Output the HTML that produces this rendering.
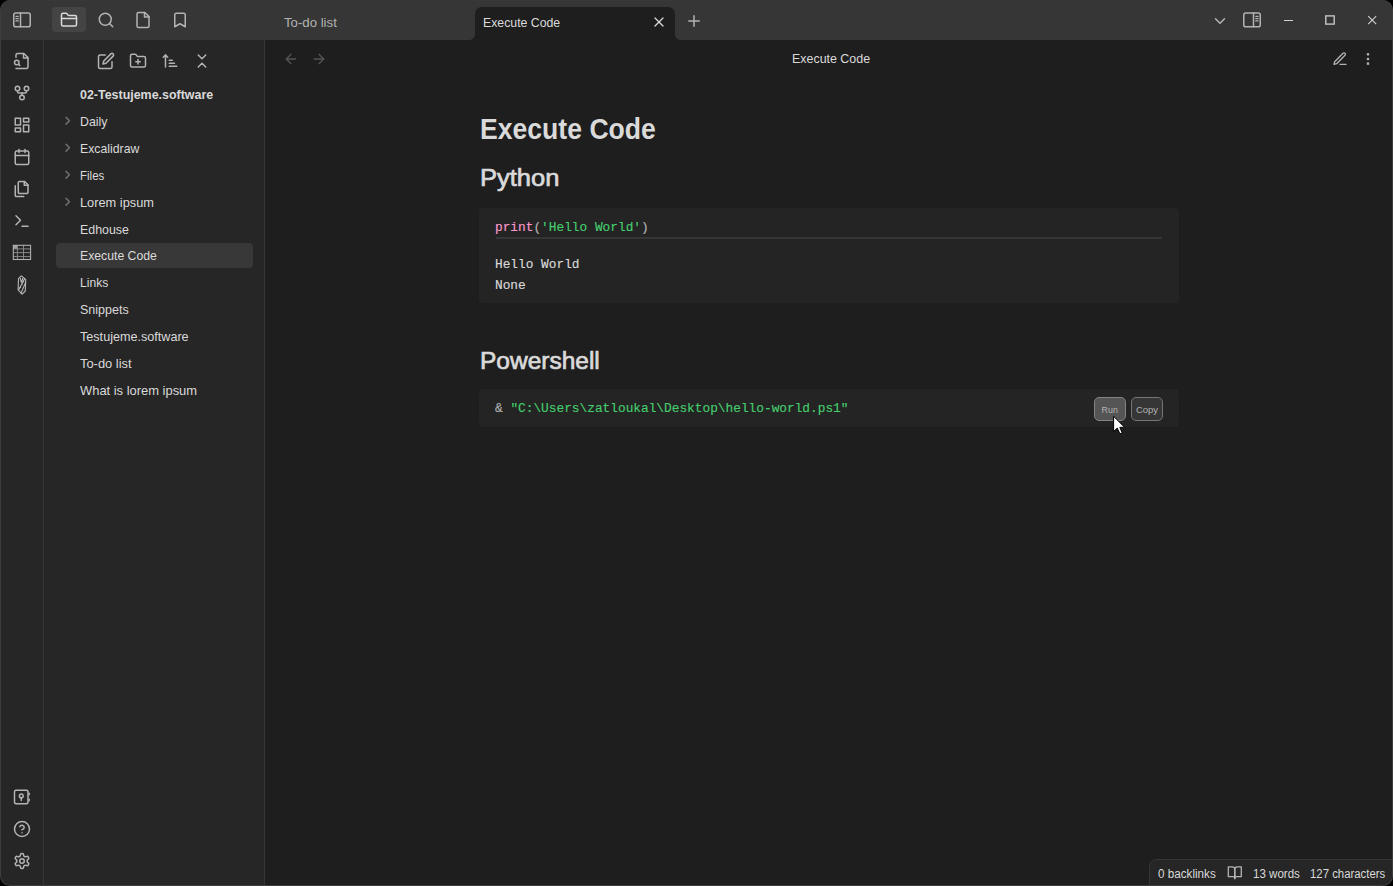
<!DOCTYPE html>
<html>
<head>
<meta charset="utf-8">
<title>Execute Code - Obsidian</title>
<style>
*{box-sizing:border-box;margin:0;padding:0}
html,body{width:1393px;height:886px;overflow:hidden;background:#000;font-family:"Liberation Sans",sans-serif;}
#win{position:absolute;left:0;top:0;width:1393px;height:886px;background:#1e1e1e;border-radius:10px;overflow:hidden;}
#titlebar{position:absolute;left:0;top:0;width:1393px;height:40px;background:#363636;}
#ribbon{position:absolute;left:0;top:40px;width:44px;height:846px;background:#262626;border-right:1px solid #363636;}
#side{position:absolute;left:44px;top:40px;width:221px;height:846px;background:#262626;border-right:1px solid #363636;}
#main{position:absolute;left:265px;top:40px;width:1128px;height:846px;background:#1e1e1e;}
.abs{position:absolute}
svg.ic{position:absolute;fill:none;stroke:#b3b3b3;stroke-width:2;stroke-linecap:round;stroke-linejoin:round;overflow:visible}
.h2{font-size:24.4px;color:#dadada;-webkit-text-stroke:0.7px #dadada}
.m{font-family:"Liberation Mono",monospace;font-size:13.7px;color:#b3b3b3;transform:scaleX(.9355);-webkit-text-stroke:0.15px}
.s{font-size:12px;color:#b3b3b3}
.btn{width:32px;height:24px;border:1px solid;border-radius:5px;font-size:9.5px;color:#b3b3b3;text-align:center;line-height:23px}
.f{left:36px;font-size:13px;color:#b3b3b3}
svg.ch{left:17.45px;stroke:#6e6e6e;stroke-width:2.7}
.t{position:absolute;transform-origin:0 50%;white-space:nowrap;color:#dadada;line-height:1}
</style>
</head>
<body>
<div id="win">
<div id="titlebar">
<!-- left sidebar toggle -->
<svg class="ic" style="left:13px;top:11px" width="18" height="18" viewBox="0 0 24 24"><rect x="1" y="2.6" width="22" height="18.4" rx="2.8"/><line x1="10" y1="2.6" x2="10" y2="21"/><g stroke-width="1.5"><line x1="3.8" y1="7.1" x2="7.1" y2="7.1"/><line x1="3.8" y1="10.1" x2="7.1" y2="10.1"/><line x1="3.8" y1="13.2" x2="7.1" y2="13.2"/></g></svg>
<div class="abs" style="left:52px;top:7px;width:34px;height:25px;border-radius:4px;background:#444444"></div>
<svg class="ic" style="left:60px;top:11px;stroke:#dadada" width="18" height="18" viewBox="0 0 24 24"><path d="M4 20h16a2 2 0 0 0 2-2V8a2 2 0 0 0-2-2h-7.93a2 2 0 0 1-1.66-.9l-.82-1.2A2 2 0 0 0 7.93 3H4a2 2 0 0 0-2 2v13c0 1.1.9 2 2 2Z"/><path d="M2 10h20"/></svg>
<svg class="ic" style="left:97px;top:11px" width="18" height="18" viewBox="0 0 24 24"><circle cx="11" cy="11" r="8"/><line x1="21" y1="21" x2="16.65" y2="16.65"/></svg>
<svg class="ic" style="left:134px;top:11px" width="18" height="18" viewBox="0 0 24 24"><path d="M14.5 2H6a2 2 0 0 0-2 2v16a2 2 0 0 0 2 2h12a2 2 0 0 0 2-2V7.5L14.5 2z"/><polyline points="14 2 14 8 20 8"/></svg>
<svg class="ic" style="left:171px;top:11px" width="18" height="18" viewBox="0 0 24 24"><path d="m19 21-7-4-7 4V5a2 2 0 0 1 2-2h10a2 2 0 0 1 2 2v16z"/></svg>
<!-- tabs -->
<div class="t" style="left:284px;top:16px;font-size:13px;color:#b3b3b3;transform:scaleX(1.015)">To-do list</div>
<div class="abs" style="left:475px;top:7px;width:200px;height:33px;background:#1e1e1e;border-radius:7px 7px 0 0"></div>
<div class="abs" style="left:469px;top:34px;width:6px;height:6px;background:radial-gradient(circle at 0 0,#363636 5.5px,#1e1e1e 6.5px)"></div>
<div class="abs" style="left:675px;top:34px;width:6px;height:6px;background:radial-gradient(circle at 100% 0,#363636 5.5px,#1e1e1e 6.5px)"></div>
<div class="t" style="left:483.4px;top:16px;font-size:13px;color:#dadada;transform:scaleX(.945)">Execute Code</div>
<svg class="ic" style="left:651px;top:14px;stroke:#dadada;stroke-width:1.9" width="16" height="16" viewBox="0 0 24 24"><line x1="18" y1="6" x2="6" y2="18"/><line x1="6" y1="6" x2="18" y2="18"/></svg>
<svg class="ic" style="left:685px;top:12px" width="18" height="18" viewBox="0 0 24 24"><line x1="12" y1="5" x2="12" y2="19"/><line x1="5" y1="12" x2="19" y2="12"/></svg>
<!-- right -->
<svg class="ic" style="left:1211px;top:11.6px" width="18" height="18" viewBox="0 0 24 24"><polyline points="6 9 12 15 18 9"/></svg>
<svg class="ic" style="left:1243.2px;top:11px" width="18" height="18" viewBox="0 0 24 24"><rect x="1" y="2.6" width="22" height="18.4" rx="2.8"/><line x1="14" y1="2.6" x2="14" y2="21"/><g stroke-width="1.5"><line x1="16.9" y1="7.1" x2="20.2" y2="7.1"/><line x1="16.9" y1="10.1" x2="20.2" y2="10.1"/><line x1="16.9" y1="13.2" x2="20.2" y2="13.2"/></g></svg>
<div class="abs" style="left:1284px;top:20px;width:8.5px;height:1px;background:#cfcfcf"></div>
<svg class="abs" style="left:1324px;top:14px;overflow:visible" width="12" height="12" viewBox="0 0 12 12"><rect x="1.8" y="1.9" width="8.4" height="8.2" fill="none" stroke="#c4c4c4" stroke-width="1.4"/></svg>
<svg class="ic" style="left:1368px;top:16px;stroke:#d4d4d4;stroke-width:1.05;stroke-linecap:butt" width="8.4" height="8.4" viewBox="0 0 8.4 8.4"><line x1="0.2" y1="0.2" x2="8.2" y2="8.2"/><line x1="8.2" y1="0.2" x2="0.2" y2="8.2"/></svg>
</div>
<div id="ribbon">
<!-- quick switcher (file-search) y=61 -->
<svg class="ic" style="left:13px;top:12px" width="18" height="18" viewBox="0 0 24 24"><path d="M4 22h14a2 2 0 0 0 2-2V7.5L14.5 2H6a2 2 0 0 0-2 2v3"/><polyline points="14 2 14 8 20 8"/><path d="M5 17a3 3 0 1 0 0-6 3 3 0 0 0 0 6z"/><path d="m9 18-1.5-1.500"/></svg>
<!-- graph -->
<svg class="ic" style="left:13px;top:44px" width="18" height="18" viewBox="0 0 24 24"><circle cx="12" cy="18" r="3"/><circle cx="6" cy="6" r="3"/><circle cx="18" cy="6" r="3"/><path d="M18 9v1a2 2 0 0 1-2 2H8a2 2 0 0 1-2-2V9"/><path d="M12 12v3"/></svg>
<!-- canvas -->
<svg class="ic" style="left:13px;top:76px" width="18" height="18" viewBox="0 0 24 24"><rect x="3" y="3" width="7" height="9"/><rect x="14" y="3" width="7" height="5"/><rect x="14" y="12" width="7" height="9"/><rect x="3" y="16" width="7" height="5"/></svg>
<!-- calendar -->
<svg class="ic" style="left:13px;top:108px" width="18" height="18" viewBox="0 0 24 24"><rect x="3" y="4" width="18" height="18" rx="2" ry="2"/><line x1="16" y1="2" x2="16" y2="6"/><line x1="8" y1="2" x2="8" y2="6"/><line x1="3" y1="10" x2="21" y2="10"/></svg>
<!-- files -->
<svg class="ic" style="left:13px;top:140px" width="18" height="18" viewBox="0 0 24 24"><path d="M15.500 2H8.600c-.400 0-.800.200-1.100.500-.300.300-.500.700-.500 1.100v12.800c0 .400.200.800.500 1.100.300.300.700.500 1.100.500h9.800c.400 0 .800-.200 1.100-.500.300-.300.500-.700.500-1.100V6.500L15.500 2z"/><path d="M3 7.600v12.800c0 .400.200.800.500 1.100.300.300.700.500 1.100.500h9.800"/><path d="M15 2v5h5"/></svg>
<!-- terminal -->
<svg class="ic" style="left:13px;top:172px" width="18" height="18" viewBox="0 0 24 24"><polyline points="4 17 10 11 4 5"/><line x1="12" y1="19" x2="20" y2="19"/></svg>
<!-- table -->
<svg class="ic" style="left:12px;top:204px;stroke-linecap:butt;stroke-linejoin:miter;stroke:#8e8e8e;stroke-width:0.9" width="20" height="17" viewBox="0 0 20 17"><rect x="1.3" y="1.3" width="4.1" height="3.6" fill="#a0a0a0" stroke="none"/><line x1="1.3" y1="4.9" x2="18.6" y2="4.9"/><line x1="1.3" y1="8.6" x2="18.6" y2="8.6"/><line x1="1.3" y1="12.6" x2="18.6" y2="12.6"/><line x1="5.4" y1="1.3" x2="5.4" y2="15.5"/><line x1="11.5" y1="1.3" x2="11.5" y2="15.5"/><rect x="1.3" y="1.3" width="17.3" height="14.2" stroke="#b3b3b3" stroke-width="1.05"/></svg>
<!-- excalidraw -->
<svg class="ic" style="left:17px;top:235px;stroke-width:1.1;stroke:#b8b8b8" width="10" height="20" viewBox="0 0 10 20"><path d="M4.35 0.8 L8.7 4.4 L8.3 16 L5.1 19.2 L1.1 14.9 L1.5 3.7 Z"/><path d="M7.6 3.7 L1.8 14.5 M8.7 7.3 L4 18.1 M3.3 3.3 L4.35 7.3 L5.9 3.3"/><g fill="#b0b0b0" stroke="none"><circle cx="6.4" cy="6.7" r="0.75"/><circle cx="4.9" cy="9.6" r="0.75"/><circle cx="3.5" cy="12.5" r="0.75"/></g></svg>
<!-- vault -->
<svg class="ic" style="left:13px;top:748px" width="18" height="18" viewBox="0 0 24 24"><rect x="2" y="3" width="18" height="18" rx="2"/><circle cx="11" cy="10.500" r="2.500"/><line x1="11" y1="13" x2="11" y2="16.500"/><line x1="21.500" y1="7" x2="21.500" y2="9"/><line x1="21.500" y1="15" x2="21.500" y2="17"/></svg>
<!-- help -->
<svg class="ic" style="left:13px;top:780px" width="18" height="18" viewBox="0 0 24 24"><circle cx="12" cy="12" r="10"/><path d="M9.090 9a3 3 0 0 1 5.830 1c0 2-3 3-3 3"/><line x1="12" y1="17" x2="12.010" y2="17"/></svg>
<!-- settings -->
<svg class="ic" style="left:13px;top:812px" width="18" height="18" viewBox="0 0 24 24"><path d="M12.220 2h-.440a2 2 0 0 0-2 2v.180a2 2 0 0 1-1 1.730l-.430.250a2 2 0 0 1-2 0l-.150-.080a2 2 0 0 0-2.730.730l-.220.380a2 2 0 0 0 .730 2.730l.150.100a2 2 0 0 1 1 1.720v.510a2 2 0 0 1-1 1.740l-.150.090a2 2 0 0 0-.730 2.730l.220.380a2 2 0 0 0 2.730.730l.150-.080a2 2 0 0 1 2 0l.430.250a2 2 0 0 1 1 1.730V20a2 2 0 0 0 2 2h.440a2 2 0 0 0 2-2v-.180a2 2 0 0 1 1-1.730l.430-.250a2 2 0 0 1 2 0l.150.080a2 2 0 0 0 2.730-.730l.220-.390a2 2 0 0 0-.730-2.730l-.150-.080a2 2 0 0 1-1-1.740v-.500a2 2 0 0 1 1-1.740l.150-.090a2 2 0 0 0 .730-2.730l-.220-.380a2 2 0 0 0-2.730-.730l-.150.080a2 2 0 0 1-2 0l-.430-.250a2 2 0 0 1-1-1.730V4a2 2 0 0 0-2-2z"/><circle cx="12" cy="12" r="3"/></svg>
</div>
<div id="side">
<!-- nav buttons: coords relative to side (x-44, y-40) -->
<svg class="ic" style="left:53px;top:12px" width="18" height="18" viewBox="0 0 24 24"><path d="M11 4H4a2 2 0 0 0-2 2v14a2 2 0 0 0 2 2h14a2 2 0 0 0 2-2v-7"/><path d="M18.500 2.500a2.121 2.121 0 0 1 3 3L12 15l-4 1 1-4 9.500-9.500z"/></svg>
<svg class="ic" style="left:85px;top:12px" width="18" height="18" viewBox="0 0 24 24"><path d="M4 20h16a2 2 0 0 0 2-2V8a2 2 0 0 0-2-2h-7.930a2 2 0 0 1-1.660-.900l-.820-1.200A2 2 0 0 0 7.930 3H4a2 2 0 0 0-2 2v13c0 1.100.900 2 2 2Z"/><line x1="12" y1="10" x2="12" y2="16"/><line x1="9" y1="13" x2="15" y2="13"/></svg>
<svg class="ic" style="left:117px;top:12px" width="18" height="18" viewBox="0 0 24 24"><path d="m3 7 3-3 3 3"/><path d="M6 4v16"/><path d="M11 11h4"/><path d="M11 15h7"/><path d="M11 19h10"/></svg>
<svg class="ic" style="left:149px;top:12px" width="18" height="18" viewBox="0 0 24 24"><path d="m7 20 5-5 5 5"/><path d="m7 4 5 5 5-5"/></svg>
<div class="t" style="left:36px;top:48px;font-size:13px;font-weight:bold;color:#dadada;transform:scaleX(.957)">02-Testujeme.software</div>
<div class="t f" style="top:75px;transform:scaleX(0.952)">Daily</div>
<div class="t f" style="top:102px;transform:scaleX(0.944)">Excalidraw</div>
<div class="t f" style="top:129px;transform:scaleX(0.886)">Files</div>
<div class="t f" style="top:156px;transform:scaleX(0.984)">Lorem ipsum</div>
<div class="t f" style="top:183px;transform:scaleX(0.953)">Edhouse</div>
<div class="abs" style="left:12px;top:203px;width:197px;height:25px;border-radius:4px;background:#383838"></div>
<div class="t f" style="top:209px;color:#dadada;transform:scaleX(.941)">Execute Code</div>
<div class="t f" style="top:236px;transform:scaleX(0.93)">Links</div>
<div class="t f" style="top:263px;transform:scaleX(0.963)">Snippets</div>
<div class="t f" style="top:290px;transform:scaleX(0.97)">Testujeme.software</div>
<div class="t f" style="top:317px;transform:scaleX(0.992)">To-do list</div>
<div class="t f" style="top:344px;transform:scaleX(0.994)">What is lorem ipsum</div>
<svg class="ic ch" style="top:74.45px" width="13.5" height="13.5" viewBox="0 0 24 24"><polyline points="9 18 15 12 9 6"/></svg>
<svg class="ic ch" style="top:101.45px" width="13.5" height="13.5" viewBox="0 0 24 24"><polyline points="9 18 15 12 9 6"/></svg>
<svg class="ic ch" style="top:128.45px" width="13.5" height="13.5" viewBox="0 0 24 24"><polyline points="9 18 15 12 9 6"/></svg>
<svg class="ic ch" style="top:155.45px" width="13.5" height="13.5" viewBox="0 0 24 24"><polyline points="9 18 15 12 9 6"/></svg>
</div>
<div id="main">
<!-- coords relative to main (x-265, y-40) -->
<svg class="ic" style="left:18px;top:11.1px;stroke:#545454" width="16" height="16" viewBox="0 0 24 24"><line x1="19" y1="12" x2="5" y2="12"/><polyline points="12 19 5 12 12 5"/></svg>
<svg class="ic" style="left:46.2px;top:11.1px;stroke:#545454" width="16" height="16" viewBox="0 0 24 24"><line x1="5" y1="12" x2="19" y2="12"/><polyline points="12 5 19 12 12 19"/></svg>
<div class="t" id="vh" style="left:527px;top:12px;font-size:13px;color:#dadada;transform:scaleX(.956)">Execute Code</div>
<svg class="ic" style="left:1067px;top:10.6px" width="16" height="16" viewBox="0 0 24 24"><path d="M12 20h9"/><path d="M16.500 3.500a2.121 2.121 0 0 1 3 3L7 19l-4 1 1-4L16.500 3.500z"/></svg>
<svg class="ic" style="left:1095px;top:11px" width="16" height="16" viewBox="0 0 24 24"><circle cx="12" cy="12" r="1"/><circle cx="12" cy="5" r="1"/><circle cx="12" cy="19" r="1"/></svg>

<div class="t" id="h1" style="left:215px;top:73px;font-size:30.4px;font-weight:bold;color:#dadada;transform:scaleX(.875)">Execute Code</div>
<div class="t h2" id="h2a" style="left:215px;top:126px;transform:scaleX(1.046)">Python</div>

<div class="abs" style="left:214px;top:168px;width:700px;height:95px;border-radius:4px;background:#242424"></div>
<div class="t m" style="left:230px;top:181px"><span style="color:#fa99cd">print</span><span style="color:#b3b3b3">(</span><span style="color:#44cf6e">'Hello World'</span><span style="color:#b3b3b3">)</span></div>
<div class="abs" style="left:231px;top:197px;width:666px;height:2px;background:#363636"></div>
<div class="t m" style="left:230px;top:218px">Hello World</div>
<div class="t m" style="left:230px;top:239px">None</div>

<div class="t h2" id="h2b" style="left:214.5px;top:308.7px;transform:scaleX(1.004)">Powershell</div>
<div class="abs" style="left:214px;top:349px;width:700px;height:38px;border-radius:4px;background:#242424"></div>
<div class="t m" style="left:230px;top:362px"><span style="color:#b3b3b3">&amp; </span><span style="color:#44cf6e">"C:\Users\zatloukal\Desktop\hello-world.ps1"</span></div>
<div class="abs btn" style="left:829px;top:357px;background:#555;border-color:#838383"><span style="display:inline-block;transform:scaleX(.93)">Run</span></div>
<div class="abs btn" style="left:866px;top:357px;background:#363636;border-color:#757575">Copy</div>
<!-- cursor -->
<svg class="abs" style="left:848px;top:374.9px;overflow:visible" width="13" height="20" viewBox="0 0 13 20"><path d="M0.6 1.3 L0.6 16.5 L4.3 13.1 L6.9 18.8 L9.2 17.8 L6.8 12.4 L11.5 12.2 Z" fill="#fff" stroke="#000" stroke-width="1" stroke-linejoin="miter"/></svg>

<!-- status bar -->
<div class="abs" style="left:884px;top:819px;width:246px;height:30px;background:#262626;border:1px solid #363636;border-radius:8px 0 0 0"></div>
<div class="t s" style="left:893px;top:828px;transform:scaleX(.973)">0 backlinks</div>
<svg class="ic" style="left:961.5px;top:824.8px;stroke-width:2" width="15.6" height="15.6" viewBox="0 0 24 24"><path d="M2 3h6a4 4 0 0 1 4 4v14a3 3 0 0 0-3-3H2z"/><path d="M22 3h-6a4 4 0 0 0-4 4v14a3 3 0 0 1 3-3h7z"/></svg>
<div class="t s" style="left:988px;top:828px;transform:scaleX(.963)">13 words</div>
<div class="t s" style="left:1044.5px;top:828px;transform:scaleX(.9475)">127 characters</div>
</div>
<div class="abs" style="left:0;top:0;width:1393px;height:886px;border:1px solid #3d3d3d;border-top-color:#383838;border-radius:10px"></div>
</div>
</body>
</html>
